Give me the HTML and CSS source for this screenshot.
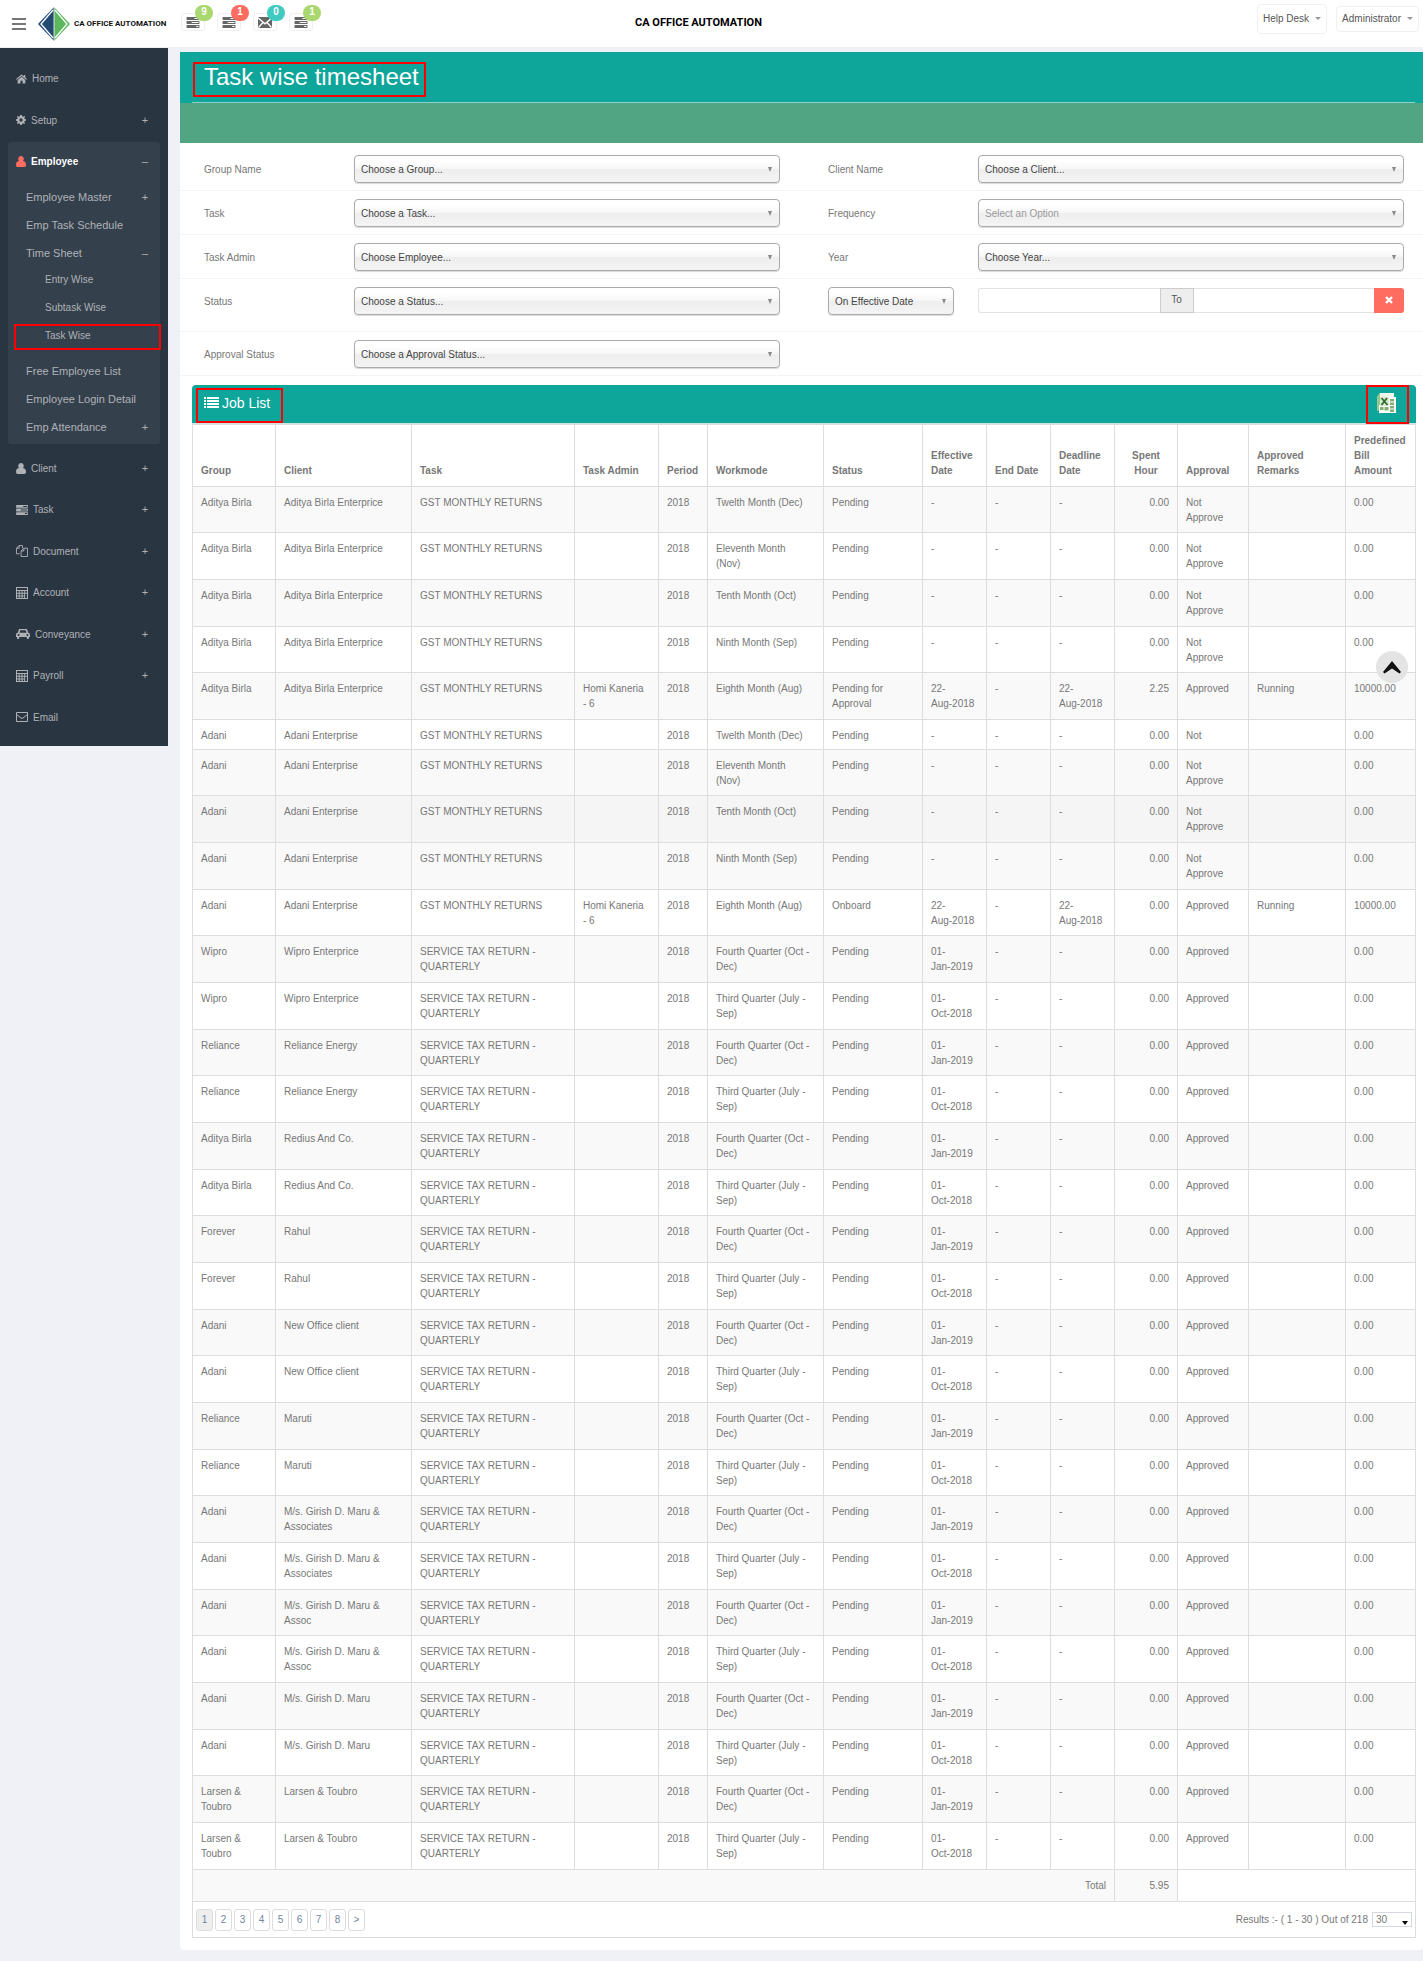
FILE: index.html
```html
<!DOCTYPE html>
<html lang="en">
<head>
<meta charset="utf-8">
<title>Task wise timesheet</title>
<link rel="stylesheet" href="styles.css">
</head>
<body>
<svg class="defs" aria-hidden="true">
  <symbol id="i-tasks" viewBox="0 0 14 12"><path fill-rule="evenodd" d="M0 0h14v3.4H0zM8.5 1.1v1.2H13V1.1zM0 4.3h14v3.4H0zM5.5 5.4v1.2H13V5.4zM0 8.6h14V12H0zM10.5 9.7v1.2H13V9.700z"/></symbol>
  <symbol id="i-user" viewBox="0 0 10 11"><path d="M5 0a2.700 2.900 0 0 1 2 4.900C9.200 5.100 10 6.600 10 9c0 1.300-.6 2-1.700 2H1.700C.6 11 0 10.300 0 9c0-2.400.8-3.900 3-4.100A2.700 2.900 0 0 1 5 0z"/></symbol>
  <symbol id="i-calc" viewBox="0 0 12 12"><path fill-rule="evenodd" d="M0 0h12v12H0zM1 1v2h10V1zM1 4v1.800h1.700V4zM3.700 4v1.800h1.800V4zM6.500 4v1.800h1.700V4zM9.200 4v1.800H11V4zM1 6.800v1.700h1.700V6.800zM3.700 6.800v1.700h1.800V6.800zM6.500 6.800v1.700h1.700V6.800zM1 9.500V11h1.700V9.500zM3.700 9.500V11h1.800V9.500zM6.500 9.500V11h1.700V9.500zM9.200 6.800V11H11V6.800z"/></symbol>
</svg>

<header class="topbar">
  <button class="burger" type="button" aria-label="Toggle menu"><span></span><span></span><span></span></button>
  <a class="brand" href="#">
    <svg width="32" height="34" viewBox="0 0 32 34" aria-hidden="true">
      <path d="M16 0v34L0 17z" fill="#244a72"/><path d="M16 0v34l16-17z" fill="#5cb85c"/>
      <path d="M15 3L3 17l12 14M17 3l12 14-12 14" fill="none" stroke="#fff" stroke-width="1.300"/>
      <path d="M16 0v34" stroke="#fff" stroke-width=".8"/>
    </svg>
    <span>CA OFFICE AUTOMATION</span>
  </a>
  <nav class="alerts" aria-label="Notifications">
    <a class="alert" href="#"><svg width="14" height="11"><use href="#i-tasks"/></svg><span class="badge green">9</span></a>
    <a class="alert" href="#"><svg width="14" height="11"><use href="#i-tasks"/></svg><span class="badge red">1</span></a>
    <a class="alert" href="#"><svg width="14" height="11" viewBox="0 0 14 11"><path d="M0 0h14v11H0z"/><path d="M0 .8l7 6 7-6M.5 10.500L5 5.500M13.500 10.500L9 5.500" fill="none" stroke="#fff" stroke-width="1.300"/></svg><span class="badge teal">0</span></a>
    <a class="alert" href="#"><svg width="14" height="11"><use href="#i-tasks"/></svg><span class="badge green">1</span></a>
  </nav>
  <strong class="app-name">CA OFFICE AUTOMATION</strong>
  <div class="account">
    <button class="drop help" type="button">Help Desk<i class="caret"></i></button>
    <button class="drop" type="button">Administrator<i class="caret"></i></button>
  </div>
</header>

<div class="shell">
  <nav class="sidebar" aria-label="Main">
    <ul class="menu">
      <li class="top"><a href="#"><svg width="11" height="10" viewBox="0 0 12 10"><path d="M6 0l2.500 2.100V.7h1.600v2.700L12 5l-.8.9L6 1.600.8 5.900 0 5zM6 2.500l4.200 3.500v4H7.200V7H4.800v3h-3V6z"/></svg>Home</a></li>
      <li class="top"><a href="#"><svg width="10" height="10" viewBox="0 0 12 12"><path fill-rule="evenodd" d="M5 0h2l.3 1.600 1.200.5L9.900 1.200l1 1L10 3.600l.4 1.200L12 5v2l-1.600.3-.5 1.200.9 1.400-1 1-1.400-.9-1.100.4L7 12H5l-.3-1.600-1.200-.5-1.400.9-1-1L2 8.400l-.4-1.100L0 7V5l1.600-.3.5-1.200-1-1.300 1-1 1.400.9 1.200-.5zM6 4a2 2 0 1 0 0 4 2 2 0 0 0 0-4z"/></svg>Setup<b>+</b></a></li>
      <li class="open">
        <a class="head" href="#"><svg width="10" height="11"><use href="#i-user"/></svg>Employee<b>–</b></a>
        <ul class="sub">
          <li><a href="#">Employee Master<b>+</b></a></li>
          <li><a href="#">Emp Task Schedule</a></li>
          <li><a href="#">Time Sheet<b>–</b></a>
            <ul class="leaf">
              <li><a href="#">Entry Wise</a></li>
              <li><a href="#">Subtask Wise</a></li>
              <li class="marked"><a href="#" aria-current="page">Task Wise</a></li>
            </ul>
          </li>
          <li><a href="#">Free Employee List</a></li>
          <li><a href="#">Employee Login Detail</a></li>
          <li><a href="#">Emp Attendance<b>+</b></a></li>
        </ul>
      </li>
      <li class="top"><a href="#"><svg width="10" height="11"><use href="#i-user"/></svg>Client<b>+</b></a></li>
      <li class="top"><a href="#"><svg width="12" height="10"><use href="#i-tasks"/></svg>Task<b>+</b></a></li>
      <li class="top"><a href="#"><svg width="12" height="12" viewBox="0 0 13 13"><path d="M4 9.500H.5v-6l3-3H7v3M3.500.5v3h-3M5.500 6.500l3-3h4v9h-7zM8.500 3.500v3h-3" fill="none" stroke="currentColor"/></svg>Document<b>+</b></a></li>
      <li class="top"><a href="#"><svg width="12" height="12"><use href="#i-calc"/></svg>Account<b>+</b></a></li>
      <li class="top"><a href="#"><svg width="14" height="10" viewBox="0 0 14 10"><path fill-rule="evenodd" d="M4 0h6c.8 0 1.200.3 1.400 1l.8 2.700c1.200.1 1.800.8 1.800 1.900V8h-1v1c0 1.300-2.200 1.300-2.200 0V8H3.200v1C3.200 10.300 1 10.300 1 9V8H0V5.600c0-1.100.6-1.800 1.800-1.900L2.600 1C2.800.3 3.200 0 4 0zM4.200 1.300l-.7 2.400h7l-.7-2.400zM2.600 4.900a1 1 0 1 0 0 2 1 1 0 0 0 0-2zM11.400 4.900a1 1 0 1 0 0 2 1 1 0 0 0 0-2z"/></svg>Conveyance<b>+</b></a></li>
      <li class="top"><a href="#"><svg width="12" height="12"><use href="#i-calc"/></svg>Payroll<b>+</b></a></li>
      <li class="top"><a href="#"><svg width="12" height="10" viewBox="0 0 12 10"><path d="M.5.5h11v9H.5zM.5 2.500L5 6q1 .8 2 0l4.500-3.500" fill="none" stroke="currentColor"/></svg>Email</a></li>
    </ul>
  </nav>

  <main class="page">
    <div class="title"><h1>Task wise timesheet</h1></div>
    <div class="strip"></div>

    <form class="filters">
      <div class="row">
        <div class="field"><label for="group">Group Name</label><span class="pick"><select id="group"><option>Choose a Group...</option></select></span></div>
        <div class="field"><label for="client">Client Name</label><span class="pick"><select id="client"><option>Choose a Client...</option></select></span></div>
      </div>
      <div class="row">
        <div class="field"><label for="task">Task</label><span class="pick"><select id="task"><option>Choose a Task...</option></select></span></div>
        <div class="field"><label for="freq">Frequency</label><span class="pick"><select id="freq" class="empty"><option>Select an Option</option></select></span></div>
      </div>
      <div class="row">
        <div class="field"><label for="admin">Task Admin</label><span class="pick"><select id="admin"><option>Choose Employee...</option></select></span></div>
        <div class="field"><label for="year">Year</label><span class="pick"><select id="year"><option>Choose Year...</option></select></span></div>
      </div>
      <div class="row tall">
        <div class="field"><label for="status">Status</label><span class="pick"><select id="status"><option>Choose a Status...</option></select></span></div>
        <div class="field">
          <span class="pick short"><select aria-label="Date type"><option>On Effective Date</option></select></span>
          <div class="range">
            <input type="text" aria-label="From date"><span>To</span><input type="text" aria-label="To date">
            <button type="button" aria-label="Clear dates"><svg width="8" height="8" viewBox="0 0 8 8"><path d="M1 1l6 6M7 1L1 7" stroke="#fff" stroke-width="2.400"/></svg></button>
          </div>
        </div>
      </div>
      <div class="row">
        <div class="field"><label for="approval">Approval Status</label><span class="pick"><select id="approval"><option>Choose a Approval Status...</option></select></span></div>
      </div>
    </form>

    <section class="jobs">
      <div class="jobs-head">
        <h2><svg width="15" height="11" viewBox="0 0 15 11"><path d="M0 0h2v2H0zM3 0h12v2H3zM0 3h2v2H0zM3 3h12v2H3zM0 6h2v2H0zM3 6h12v2H3zM0 9h2v2H0zM3 9h12v2H3z"/></svg>Job List</h2>
        <button class="export" type="button" aria-label="Export to Excel">
          <svg width="20" height="20" viewBox="0 0 20 20"><path d="M4 0h14v15H1V4z" fill="#eef5ea"/><path d="M4 0L1 4v14l3-1z" fill="#9cc48e"/><path d="M3 12h17v8H3zM12 4h8v9h-8z" fill="#fff"/><path d="M14 6h4v2.500h-4zM14 9.500h4V12h-4zM14 13h4v2.500h-4zM14 16.500h4V19h-4zM8.500 14h4v3.500h-4zM4 14h3.500v3H4z" fill="#7fae70"/><path d="M4 4h9v9H4z" fill="#d6e8cf"/><path d="M5.500 5l6 7M11 5l-5.500 7" stroke="#2f6b2a" stroke-width="1.800"/></svg>
        </button>
      </div>
      <table>
        <colgroup><col class="c83"><col class="c136"><col class="c163"><col class="c84"><col class="c49"><col class="c116"><col class="c99"><col class="c64"><col class="c64"><col class="c64"><col class="c63"><col class="c71"><col class="c97"><col class="c70"></colgroup>
        <thead><tr><th>Group<th>Client<th>Task<th>Task Admin<th>Period<th>Workmode<th>Status<th>Effective Date<th>End Date<th>Deadline Date<th class="mid">Spent Hour<th>Approval<th>Approved Remarks<th>Predefined Bill Amount</tr></thead>
        <tbody>
        <tr><td>Aditya Birla<td>Aditya Birla Enterprice<td>GST MONTHLY RETURNS<td><td>2018<td>Twelth Month (Dec)<td>Pending<td>-<td>-<td>-<td>0.00<td>Not<br>Approve<td><td>0.00</tr>
        <tr><td>Aditya Birla<td>Aditya Birla Enterprice<td>GST MONTHLY RETURNS<td><td>2018<td>Eleventh Month<br>(Nov)<td>Pending<td>-<td>-<td>-<td>0.00<td>Not<br>Approve<td><td>0.00</tr>
        <tr><td>Aditya Birla<td>Aditya Birla Enterprice<td>GST MONTHLY RETURNS<td><td>2018<td>Tenth Month (Oct)<td>Pending<td>-<td>-<td>-<td>0.00<td>Not<br>Approve<td><td>0.00</tr>
        <tr><td>Aditya Birla<td>Aditya Birla Enterprice<td>GST MONTHLY RETURNS<td><td>2018<td>Ninth Month (Sep)<td>Pending<td>-<td>-<td>-<td>0.00<td>Not<br>Approve<td><td>0.00</tr>
        <tr><td>Aditya Birla<td>Aditya Birla Enterprice<td>GST MONTHLY RETURNS<td>Homi Kaneria<br>- 6<td>2018<td>Eighth Month (Aug)<td>Pending for<br>Approval<td>22-<br>Aug-2018<td>-<td>22-<br>Aug-2018<td>2.25<td>Approved<td>Running<td>10000.00</tr>
        <tr class="slim"><td>Adani<td>Adani Enterprise<td>GST MONTHLY RETURNS<td><td>2018<td>Twelth Month (Dec)<td>Pending<td>-<td>-<td>-<td>0.00<td>Not<td><td>0.00</tr>
        <tr><td>Adani<td>Adani Enterprise<td>GST MONTHLY RETURNS<td><td>2018<td>Eleventh Month<br>(Nov)<td>Pending<td>-<td>-<td>-<td>0.00<td>Not<br>Approve<td><td>0.00</tr>
        <tr class="hover"><td>Adani<td>Adani Enterprise<td>GST MONTHLY RETURNS<td><td>2018<td>Tenth Month (Oct)<td>Pending<td>-<td>-<td>-<td>0.00<td>Not<br>Approve<td><td>0.00</tr>
        <tr><td>Adani<td>Adani Enterprise<td>GST MONTHLY RETURNS<td><td>2018<td>Ninth Month (Sep)<td>Pending<td>-<td>-<td>-<td>0.00<td>Not<br>Approve<td><td>0.00</tr>
        <tr><td>Adani<td>Adani Enterprise<td>GST MONTHLY RETURNS<td>Homi Kaneria<br>- 6<td>2018<td>Eighth Month (Aug)<td>Onboard<td>22-<br>Aug-2018<td>-<td>22-<br>Aug-2018<td>0.00<td>Approved<td>Running<td>10000.00</tr>
        <tr><td>Wipro<td>Wipro Enterprice<td>SERVICE TAX RETURN -<br>QUARTERLY<td><td>2018<td>Fourth Quarter (Oct -<br>Dec)<td>Pending<td>01-<br>Jan-2019<td>-<td>-<td>0.00<td>Approved<td><td>0.00</tr>
        <tr><td>Wipro<td>Wipro Enterprice<td>SERVICE TAX RETURN -<br>QUARTERLY<td><td>2018<td>Third Quarter (July -<br>Sep)<td>Pending<td>01-<br>Oct-2018<td>-<td>-<td>0.00<td>Approved<td><td>0.00</tr>
        <tr><td>Reliance<td>Reliance Energy<td>SERVICE TAX RETURN -<br>QUARTERLY<td><td>2018<td>Fourth Quarter (Oct -<br>Dec)<td>Pending<td>01-<br>Jan-2019<td>-<td>-<td>0.00<td>Approved<td><td>0.00</tr>
        <tr><td>Reliance<td>Reliance Energy<td>SERVICE TAX RETURN -<br>QUARTERLY<td><td>2018<td>Third Quarter (July -<br>Sep)<td>Pending<td>01-<br>Oct-2018<td>-<td>-<td>0.00<td>Approved<td><td>0.00</tr>
        <tr><td>Aditya Birla<td>Redius And Co.<td>SERVICE TAX RETURN -<br>QUARTERLY<td><td>2018<td>Fourth Quarter (Oct -<br>Dec)<td>Pending<td>01-<br>Jan-2019<td>-<td>-<td>0.00<td>Approved<td><td>0.00</tr>
        <tr><td>Aditya Birla<td>Redius And Co.<td>SERVICE TAX RETURN -<br>QUARTERLY<td><td>2018<td>Third Quarter (July -<br>Sep)<td>Pending<td>01-<br>Oct-2018<td>-<td>-<td>0.00<td>Approved<td><td>0.00</tr>
        <tr><td>Forever<td>Rahul<td>SERVICE TAX RETURN -<br>QUARTERLY<td><td>2018<td>Fourth Quarter (Oct -<br>Dec)<td>Pending<td>01-<br>Jan-2019<td>-<td>-<td>0.00<td>Approved<td><td>0.00</tr>
        <tr><td>Forever<td>Rahul<td>SERVICE TAX RETURN -<br>QUARTERLY<td><td>2018<td>Third Quarter (July -<br>Sep)<td>Pending<td>01-<br>Oct-2018<td>-<td>-<td>0.00<td>Approved<td><td>0.00</tr>
        <tr><td>Adani<td>New Office client<td>SERVICE TAX RETURN -<br>QUARTERLY<td><td>2018<td>Fourth Quarter (Oct -<br>Dec)<td>Pending<td>01-<br>Jan-2019<td>-<td>-<td>0.00<td>Approved<td><td>0.00</tr>
        <tr><td>Adani<td>New Office client<td>SERVICE TAX RETURN -<br>QUARTERLY<td><td>2018<td>Third Quarter (July -<br>Sep)<td>Pending<td>01-<br>Oct-2018<td>-<td>-<td>0.00<td>Approved<td><td>0.00</tr>
        <tr><td>Reliance<td>Maruti<td>SERVICE TAX RETURN -<br>QUARTERLY<td><td>2018<td>Fourth Quarter (Oct -<br>Dec)<td>Pending<td>01-<br>Jan-2019<td>-<td>-<td>0.00<td>Approved<td><td>0.00</tr>
        <tr><td>Reliance<td>Maruti<td>SERVICE TAX RETURN -<br>QUARTERLY<td><td>2018<td>Third Quarter (July -<br>Sep)<td>Pending<td>01-<br>Oct-2018<td>-<td>-<td>0.00<td>Approved<td><td>0.00</tr>
        <tr><td>Adani<td>M/s. Girish D. Maru &amp;<br>Associates<td>SERVICE TAX RETURN -<br>QUARTERLY<td><td>2018<td>Fourth Quarter (Oct -<br>Dec)<td>Pending<td>01-<br>Jan-2019<td>-<td>-<td>0.00<td>Approved<td><td>0.00</tr>
        <tr><td>Adani<td>M/s. Girish D. Maru &amp;<br>Associates<td>SERVICE TAX RETURN -<br>QUARTERLY<td><td>2018<td>Third Quarter (July -<br>Sep)<td>Pending<td>01-<br>Oct-2018<td>-<td>-<td>0.00<td>Approved<td><td>0.00</tr>
        <tr><td>Adani<td>M/s. Girish D. Maru &amp;<br>Assoc<td>SERVICE TAX RETURN -<br>QUARTERLY<td><td>2018<td>Fourth Quarter (Oct -<br>Dec)<td>Pending<td>01-<br>Jan-2019<td>-<td>-<td>0.00<td>Approved<td><td>0.00</tr>
        <tr><td>Adani<td>M/s. Girish D. Maru &amp;<br>Assoc<td>SERVICE TAX RETURN -<br>QUARTERLY<td><td>2018<td>Third Quarter (July -<br>Sep)<td>Pending<td>01-<br>Oct-2018<td>-<td>-<td>0.00<td>Approved<td><td>0.00</tr>
        <tr><td>Adani<td>M/s. Girish D. Maru<td>SERVICE TAX RETURN -<br>QUARTERLY<td><td>2018<td>Fourth Quarter (Oct -<br>Dec)<td>Pending<td>01-<br>Jan-2019<td>-<td>-<td>0.00<td>Approved<td><td>0.00</tr>
        <tr><td>Adani<td>M/s. Girish D. Maru<td>SERVICE TAX RETURN -<br>QUARTERLY<td><td>2018<td>Third Quarter (July -<br>Sep)<td>Pending<td>01-<br>Oct-2018<td>-<td>-<td>0.00<td>Approved<td><td>0.00</tr>
        <tr><td>Larsen &amp;<br>Toubro<td>Larsen &amp; Toubro<td>SERVICE TAX RETURN -<br>QUARTERLY<td><td>2018<td>Fourth Quarter (Oct -<br>Dec)<td>Pending<td>01-<br>Jan-2019<td>-<td>-<td>0.00<td>Approved<td><td>0.00</tr>
        <tr><td>Larsen &amp;<br>Toubro<td>Larsen &amp; Toubro<td>SERVICE TAX RETURN -<br>QUARTERLY<td><td>2018<td>Third Quarter (July -<br>Sep)<td>Pending<td>01-<br>Oct-2018<td>-<td>-<td>0.00<td>Approved<td><td>0.00</tr>
        </tbody>
        <tfoot><tr><td class="sum" colspan="10">Total<td class="sum">5.95<td colspan="3"></tr></tfoot>
      </table>
      <div class="pager">
        <nav class="pages" aria-label="Pages"><a class="on" href="#">1</a><a href="#">2</a><a href="#">3</a><a href="#">4</a><a href="#">5</a><a href="#">6</a><a href="#">7</a><a href="#">8</a><a href="#">&gt;</a></nav>
        <label class="results" for="size">Results :- ( 1 - 30 ) Out of 218</label>
        <span class="size"><select id="size"><option>30</option></select></span>
      </div>
      <button class="to-top" type="button" aria-label="Back to top"><svg width="18" height="13" viewBox="0 0 18 13"><path d="M9 0l9 11-1.500 1.500L9 7.500l-7.500 5L0 11z" fill="#111"/></svg></button>
    </section>
  </main>
</div>
</body>
</html>
```

FILE: styles.css
```css
* { box-sizing: border-box; }

body {
  margin: 0;
  background: #f0f1f7;
  color: #777;
  font: 10px/15px "Liberation Sans", Arial, sans-serif;
}

a { color: inherit; text-decoration: none; }
button, select, input { font: inherit; color: inherit; }
ul { list-style: none; margin: 0; padding: 0; }
svg { fill: currentColor; flex: none; }
.defs { position: absolute; width: 0; height: 0; }

/* top bar */
.topbar {
  display: flex;
  align-items: center;
  height: 47px;
  padding: 0 4px 0 12px;
  background: #fff;
}
.burger {
  display: flex;
  flex-direction: column;
  gap: 3px;
  width: 14px;
  padding: 0;
  border: 0;
  background: none;
}
.burger span { height: 2px; background: #777; }
.brand {
  display: flex;
  align-items: center;
  gap: 4px;
  margin-left: 12px;
  color: #111;
  font: bold 8px/12px Roboto, sans-serif;
}
.brand span { width: 107px; white-space: nowrap; }
.alerts { display: flex; gap: 12px; }
.alert {
  position: relative;
  display: flex;
  align-items: center;
  justify-content: center;
  width: 24px;
  height: 18px;
  border: 1px solid #eeeef3;
  border-radius: 3px;
  color: #666;
}
.alerts { padding-bottom: 3px; }
.badge {
  position: absolute;
  top: -9px;
  left: 13px;
  width: 18px;
  height: 16px;
  border-radius: 8px;
  color: #fff;
  font-weight: bold;
  line-height: 14px;
  text-align: center;
}
.green { background: #a9d86e; }
.red { background: #ff6c60; }
.teal { background: #41cac0; }
.app-name {
  flex: 1;
  padding: 0 0 2px 322px;
  color: #000;
  font: bold 11px/16px Roboto, sans-serif;
}
.account { display: flex; align-items: center; gap: 9px; height: 100%; padding-bottom: 10px; }
.drop {
  display: flex;
  align-items: center;
  gap: 6px;
  height: 26px;
  padding: 0 5px;
  border: 1px solid #f0f0f5;
  border-radius: 4px;
  background: #fff;
  color: #555;
}
.help { height: 30px; }
.caret { border: 3px solid transparent; border-top-color: #999; border-bottom: 0; }

/* layout */
.shell { display: flex; align-items: flex-start; gap: 12px; padding: 1px 0 10px; }
.sidebar {
  flex: none;
  width: 168px;
  padding: 10px 8px 8px;
  background: #2a3542;
  color: #aeb2b7;
}
.page { flex: 1; min-width: 0; margin-top: 4px; background: #fff; border-radius: 0 0 4px 4px; }

/* side menu */
.menu a { display: flex; align-items: center; gap: 5px; padding: 0 8px; }
.menu b { width: 14px; margin-left: auto; font-weight: normal; font-size: 11px; text-align: center; }
.top a { height: 41px; }
.top:nth-child(even) a { height: 42px; }
.open { margin: 1px 0 3px; padding-bottom: 3px; border-radius: 3px; background: #35404d; }
.menu .head { height: 41px; padding-bottom: 3px; color: #fff; font-weight: bold; }
.head svg { color: #ff6c60; }
.head b { color: #aeb2b7; }
.sub a { height: 28px; padding-left: 18px; font-size: 11px; }
.leaf { margin: -2px 0 8px; }
.leaf a { padding-left: 37px; font-size: 10px; }
.marked { position: relative; }
.marked::after {
  content: "";
  position: absolute;
  inset: 3px -1px -1px 6px;
  border: 2px solid #f00;
}

/* page title */
.title { padding: 0 8px 0 12px; background: #0ea59a; }
.title h1 {
  position: relative;
  margin: 0;
  height: 51px;
  padding: 10px 12px 0;
  border-bottom: 1px solid #8fd0cb;
  color: #fff;
  font-size: 24px;
  font-weight: normal;
  line-height: 30px;
}
.title h1::after {
  content: "";
  position: absolute;
  top: 10px;
  left: 1px;
  box-sizing: border-box;
  width: 233px;
  height: 35px;
  border: 2px solid #f00;
}
.strip { height: 40px; background: #51a582; }

/* filters */
.filters { padding-top: 4px; }
.row {
  display: grid;
  grid-template-columns: 1fr 1fr;
  gap: 48px;
  padding: 8px 19px 7px 24px;
  border-bottom: 1px solid #f2f4f7;
}
.tall { padding-bottom: 16px; }
.field { display: grid; grid-template-columns: 150px 1fr; align-items: center; }
.pick { position: relative; display: block; }
.pick.short { margin-right: 24px; }
.pick select {
  display: block;
  width: 100%;
  height: 28px;
  padding: 1px 6px 0;
  border: 1px solid #aaa;
  border-radius: 4px;
  appearance: none;
  background: linear-gradient(#fff 20%, #f6f6f6 50%, #eee 52%, #f4f4f4);
  box-shadow: 0 1px 1px rgba(0, 0, 0, .15);
  color: #444;
}
.pick .empty { color: #999; }
.pick::after {
  content: "";
  position: absolute;
  top: 12px;
  right: 8px;
  border: 2px solid transparent;
  border-top: 5px solid #888;
  border-bottom: 0;
}
.range { display: flex; height: 26px; padding-bottom: 1px; }
.range input {
  flex: 1;
  min-width: 0;
  border: 1px solid #e2e2e4;
  border-right: 0;
  border-radius: 3px 0 0 3px;
  background: #fff;
}
.range span + input { border-left: 0; border-radius: 0; }
.range span {
  width: 34px;
  border: 1px solid #ccc;
  background: #eee;
  color: #555;
  line-height: 22px;
  text-align: center;
}
.range button { width: 30px; padding: 0; border: 0; border-radius: 0 3px 3px 0; background: #ff6c60; }

/* job list */
.jobs { position: relative; padding: 9px 7px 12px 12px; }
.jobs-head {
  display: flex;
  justify-content: space-between;
  height: 39px;
  border-bottom: 1px solid #cfe5e3;
  border-radius: 4px 4px 0 0;
  background: #0ea59a;
  color: #fff;
}
.jobs-head h2 {
  display: flex;
  align-items: center;
  gap: 3px;
  width: 87px;
  margin: 3px 0 0 4px;
  padding: 0 0 6px 6px;
  border: 2px solid #f00;
  font-size: 14px;
  font-weight: normal;
  line-height: 20px;
}
.export {
  width: 43px;
  height: 39px;
  margin-right: 7px;
  padding: 0 4px 0 0;
  border: 2px solid #f00;
  background: none;
}
table {
  width: 100%;
  table-layout: fixed;
  border-collapse: collapse;
}
th, td { padding: 8px; border: 1px solid #ddd; text-align: left; vertical-align: top; }
th { padding-right: 6px; vertical-align: bottom; }
th.mid { padding: 8px 14px; text-align: center; }
tbody tr:nth-child(odd), .sum { background: #f9f9f9; }
tbody tr:nth-child(3n+1) td { padding-bottom: 7px; }
tbody .slim td { padding-bottom: 6px; }
tbody .hover { background: #f5f5f5; }
td:nth-child(11), .sum { text-align: right; }
.c49 { width: 49px; }
.c63 { width: 63px; }
.c64 { width: 64px; }
.c70 { width: 70px; }
.c71 { width: 71px; }
.c83 { width: 83px; }
.c84 { width: 84px; }
.c97 { width: 97px; }
.c99 { width: 99px; }
.c116 { width: 116px; }
.c136 { width: 136px; }
.c163 { width: 163px; }

.pager {
  display: flex;
  align-items: center;
  height: 36px;
  padding: 0 3px;
  border: 1px solid #ddd;
  border-top: 0;
}
.pages { display: flex; gap: 2px; margin-right: auto; }
.pages a {
  width: 17px;
  height: 22px;
  border: 1px solid #ddd;
  border-radius: 3px;
  color: #6f86a0;
  line-height: 20px;
  text-align: center;
}
.pages .on { background: #eee; }
.results { margin-right: 4px; }
.size { position: relative; }
.size select {
  display: block;
  width: 40px;
  height: 15px;
  padding: 0 3px;
  border: 1px solid #d4d8e0;
  appearance: none;
  background: #fff;
  line-height: 13px;
}
.size::after {
  content: "";
  position: absolute;
  right: 4px;
  bottom: 2px;
  border: 3px solid transparent;
  border-top: 4px solid #000;
  border-bottom: 0;
}
.to-top {
  position: absolute;
  top: 275px;
  right: 15px;
  display: flex;
  align-items: center;
  justify-content: center;
  width: 32px;
  height: 32px;
  padding: 0;
  border: 0;
  border-radius: 50%;
  background: #e4e4e4;
}
```
